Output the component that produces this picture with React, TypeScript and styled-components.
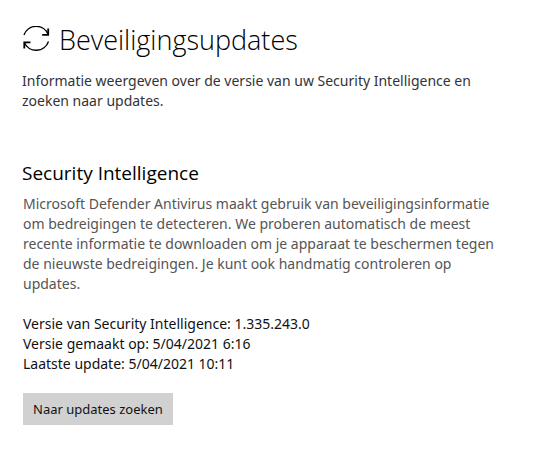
import React from "react";
import styled, { createGlobalStyle } from "styled-components";

const Global = createGlobalStyle`
  body { margin: 0; background: #fff; color: #111; font: 14px/20px "Noto Sans", "Open Sans", sans-serif; }
`;
const Page = styled.main`padding: 20px 40px 24px 22px;`;
const Header = styled.header`display: flex; align-items: center; gap: 9px; height: 40px;`;
const Title = styled.h1`margin: 0; font-family: "Open Sans", "Noto Sans", sans-serif; font-size: 27px; line-height: 42px; font-weight: 300; color: #000;`;
const Intro = styled.p`margin: 11px 0 0; color: #333;`;
const Section = styled.section`margin-top: 48px;`;
const Heading = styled.h2`margin: 0; font-family: "Open Sans", "Noto Sans", sans-serif; font-size: 19px; line-height: 28px; font-weight: 400; color: #000;`;
const Body = styled.div`padding-left: 1px;`;
const Description = styled.p`margin: 7px 0 0; color: #555;`;
const Details = styled.div`margin-top: 20px;`;
const Button = styled.button`margin-top: 19px; height: 32px; padding: 0 10px; border: 0; background: #d1d1d1; color: #111; font: inherit; font-size: 13px;`;

export default function App() {
  return (
    <Page>
      <Global />
      <Header>
        <svg width="28" height="28" viewBox="0 0 28 28" fill="none" stroke="#000" strokeWidth="1.4" aria-hidden="true">
          <path d="M2 9A13 13 0 0 1 26.3 8.5M2.3 16.5A13 13 0 0 0 26.5 15.5" />
          <path d="M26.2 2.5v6.4h-6M2.3 22.5v-6.2h6.2" strokeWidth="1.8" />
        </svg>
        <Title>Beveiligingsupdates</Title>
      </Header>
      <Intro>Informatie weergeven over de versie van uw Security Intelligence en zoeken naar updates.</Intro>
      <Section>
        <Heading>Security Intelligence</Heading>
        <Body>
          <Description>Microsoft Defender Antivirus maakt gebruik van beveiligingsinformatie om bedreigingen te detecteren. We proberen automatisch de meest recente informatie te downloaden om je apparaat te beschermen tegen de nieuwste bedreigingen. Je kunt ook handmatig controleren op updates.</Description>
          <Details>
            <div>Versie van Security Intelligence: 1.335.243.0</div>
            <div>Versie gemaakt op: 5/04/2021 6:16</div>
            <div>Laatste update: 5/04/2021 10:11</div>
          </Details>
          <Button type="button">Naar updates zoeken</Button>
        </Body>
      </Section>
    </Page>
  );
}
